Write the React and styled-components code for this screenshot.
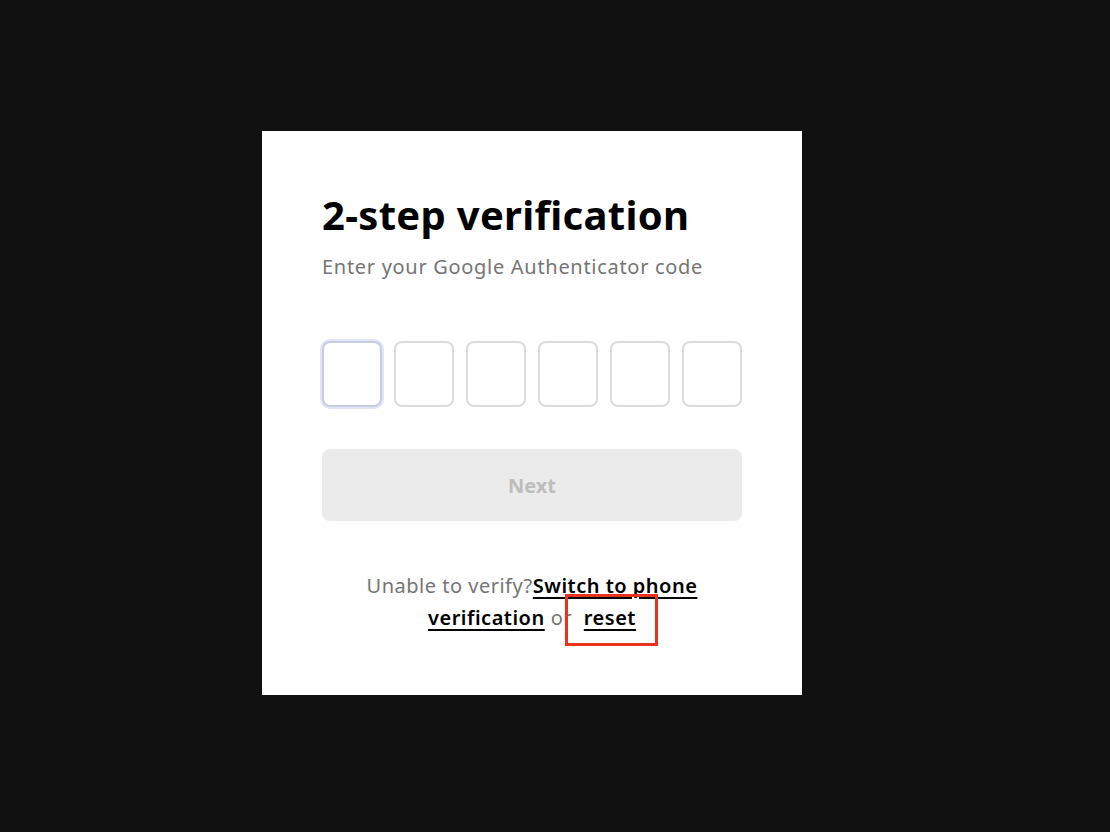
import React from "react";
import styled, { createGlobalStyle } from "styled-components";

const Global = createGlobalStyle`
  html, body { margin: 0; padding: 0; background: #111111; }
  body { font-family: "Noto Sans", "Open Sans", sans-serif; }
  * { box-sizing: border-box; }
`;

const Page = styled.div`
  width: 1110px;
  height: 832px;
  background: #111111;
  display: flex;
  align-items: flex-start;
  justify-content: flex-start;
  padding: 131px 0 0 262px;
`;

const Card = styled.div`
  width: 540px;
  height: 564px;
  background: #ffffff;
  padding: 56px 60px 0;
  display: flex;
  flex-direction: column;
`;

const Title = styled.h1`
  margin: 0;
  font-size: 40px;
  line-height: 56px;
  font-weight: 700;
  color: #000;
  letter-spacing: 0.3px;
`;

const Subtitle = styled.p`
  margin: 10px 0 0;
  font-size: 20px;
  line-height: 28px;
  color: #757575;
  letter-spacing: 0.7px;
`;

const CodeRow = styled.div`
  display: flex;
  gap: 12px;
  margin-top: 60px;
`;

const CodeBox = styled.div`
  width: 60px;
  height: 66px;
  border: 2px solid ${(p) => (p.$focused ? "#c9cde3" : "#dcdcdc")};
  border-radius: 8px;
  background: #fff;
  box-shadow: ${(p) => (p.$focused ? "0 0 0 2px #e3e6f6" : "none")};
`;

const NextButton = styled.button`
  margin-top: 42px;
  width: 100%;
  height: 72px;
  border: none;
  border-radius: 8px;
  background: #ebebeb;
  color: #bdbdbd;
  font-family: inherit;
  font-size: 20px;
  font-weight: 700;
  cursor: not-allowed;
`;

const Footer = styled.p`
  margin: 49px 0 0;
  text-align: center;
  font-size: 20px;
  line-height: 32px;
  color: #757575;
  padding: 0 20px;
  letter-spacing: 0.5px;
`;

const Link = styled.a`
  color: #000;
  font-weight: 600;
  text-decoration: underline;
  text-underline-offset: 4px;
  text-decoration-thickness: 2px;
  position: relative;
  margin-left: ${(p) => (p.$spaced ? "6px" : "0")};
`;

const Or = styled.span`
  margin-left: 6px;
`;

const Highlight = styled.span`
  position: absolute;
  left: -19px;
  right: -22px;
  top: -10px;
  bottom: -15px;
  border: 3px solid #e8331f;
  pointer-events: none;
`;

export default function App() {
  return (
    <>
      <Global />
      <Page>
        <Card>
          <Title>2-step verification</Title>
          <Subtitle>Enter your Google Authenticator code</Subtitle>
          <CodeRow>
            {[0, 1, 2, 3, 4, 5].map((i) => (
              <CodeBox key={i} $focused={i === 0} />
            ))}
          </CodeRow>
          <NextButton disabled>Next</NextButton>
          <Footer>
            Unable to verify?<Link>Switch to phone verification</Link>
            <Or>or</Or>{" "}
            <Link $spaced>
              reset
              <Highlight />
            </Link>
          </Footer>
        </Card>
      </Page>
    </>
  );
}
